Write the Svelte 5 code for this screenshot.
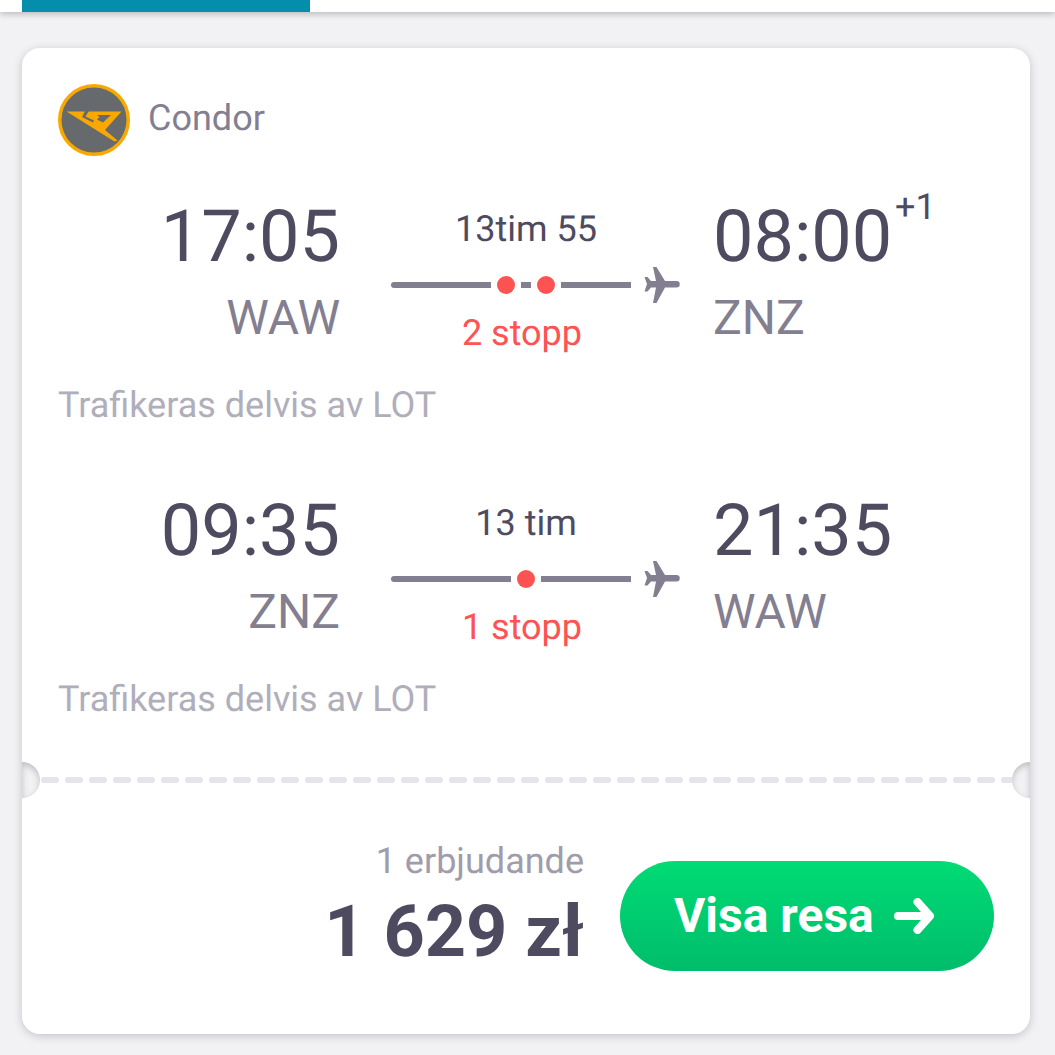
<script>
  const legs = [
    { dep: "17:05", from: "WAW", arr: "08:00", to: "ZNZ", plus: "+1", dur: "13tim 55", stops: 2, tail: 70, label: "2 stopp" },
    { dep: "09:35", from: "ZNZ", arr: "21:35", to: "WAW", plus: "", dur: "13 tim", stops: 1, tail: 90, label: "1 stopp" }
  ];
</script>

<div class="page">
  <div class="topbar"><div class="tab"></div></div>

  <main class="card">
    <section class="upper">
      <header class="airline">
        <svg class="logo" viewBox="0 0 72 72" width="72" height="72">
          <circle cx="36" cy="36" r="34.250" fill="#676a6c" stroke="#f9a800" stroke-width="3.500" />
          <path d="M8.500 27.500 H63.500 L47 46 L59.500 56.500 L56.500 57.500 Z" fill="#f9a800" />
          <path d="M27 27 H31 L27.500 32.500 L36 36.500 L35 38.500 L24 33 Z M39 31 H53 L45 38.500 L39 35.500 L41.500 33 Z" fill="#676a6c" />
        </svg>
        <span class="name">Condor</span>
      </header>

      {#each legs as leg}
        <div class="bound">
          <div class="leg">
            <div class="end left">
              <div class="time">{leg.dep}</div>
              <div class="code">{leg.from}</div>
            </div>
            <div class="mid">
              <div class="dur">{leg.dur}</div>
              <div class="track">
                <div class="line">
                  <span class="seg"></span>
                  {#each Array(leg.stops) as _, i}
                    {#if i > 0}<span class="seg short"></span>{/if}
                    <span class="dot"></span>
                  {/each}
                  <span class="seg last" style="width: {leg.tail}px"></span>
                </div>
                <svg class="plane" viewBox="0 0 36 36" width="36" height="36">
                  <path d="M9 0 H12.500 L21 14 H32.500 a3.250 3.250 0 0 1 0 6.500 H21 L12.500 36 H9 L12 20.500 H7 L3.500 24.500 H0.500 L3 17 L0.500 10 H3.500 L7 14 H12 Z" fill="#837f91" />
                </svg>
              </div>
              <div class="stops">{leg.label}</div>
            </div>
            <div class="end right">
              <div class="time">{leg.arr}{#if leg.plus}<sup>{leg.plus}</sup>{/if}</div>
              <div class="code">{leg.to}</div>
            </div>
          </div>
          <p class="operated">Trafikeras delvis av LOT</p>
        </div>
      {/each}
    </section>

    <div class="divider">
      <svg class="dashes" width="972" height="6" viewBox="0 0 972 6">
        <line x1="4" y1="3" x2="972" y2="3" stroke="#e4e4ea" stroke-width="6" stroke-linecap="round" stroke-dasharray="12 12" />
      </svg>
      <span class="notch n-left"></span>
      <span class="notch n-right"></span>
    </div>

    <footer class="bottom">
      <div class="price-box">
        <div class="offers">1 erbjudande</div>
        <div class="price">1 629 zł</div>
      </div>
      <button class="cta">
        <span class="cta-label">Visa resa</span>
        <svg viewBox="0 0 41 36" width="41" height="36">
          <path d="M4 18 H35.500 M23.500 4 L36 18 L23.500 32" fill="none" stroke="#fff" stroke-width="8" stroke-linecap="round" stroke-linejoin="round" />
        </svg>
      </button>
    </footer>
  </main>
</div>

<style>
  :global(body) {
    margin: 0;
    background: #f2f2f5;
  }
  .page {
    height: 1055px;
    overflow: hidden;
    background: #f2f2f5;
    font-family: Roboto, "Liberation Sans", sans-serif;
    text-rendering: geometricPrecision;
  }
  .topbar {
    height: 12px;
    padding-left: 22px;
    background: #fff;
    box-shadow: 0 2px 6px rgba(50, 50, 60, 0.3);
  }
  .tab {
    width: 288px;
    height: 12px;
    background: #048eab;
  }
  .card {
    position: relative;
    box-sizing: border-box;
    width: 1008px;
    height: 986px;
    margin: 36px 0 0 22px;
    background: #fff;
    border-radius: 18px;
    box-shadow: 0 2px 8px rgba(60, 60, 70, 0.25);
  }
  .upper {
    height: 729px;
    padding: 36px 36px 0;
    box-sizing: border-box;
  }
  .airline {
    display: flex;
    align-items: center;
    gap: 18px;
    height: 72px;
  }
  .name {
    margin-bottom: 4px;
    font-size: 36px;
    color: #837f91;
  }
  .bound {
    height: 255px;
    margin-top: 39px;
  }
  .leg {
    display: grid;
    grid-template-columns: 282px 340px 1fr;
    height: 186px;
  }
  .end.left {
    text-align: right;
  }
  .end.right {
    padding-left: 33px;
  }
  .time {
    position: relative;
    font-size: 72px;
    line-height: 84px;
    color: #4e4b60;
  }
  sup {
    position: absolute;
    left: 182px;
    top: -6px;
    font-size: 36px;
    line-height: 36px;
  }
  .code {
    margin-top: 11px;
    font-size: 48px;
    line-height: 56px;
    color: #837f91;
  }
  .mid {
    padding-left: 51px;
  }
  .dur {
    width: 240px;
    margin-top: 10px;
    margin-left: 15px;
    text-align: center;
    font-size: 36px;
    line-height: 48px;
    color: #4e4b60;
  }
  .track {
    display: flex;
    align-items: center;
    gap: 13px;
    height: 36px;
    margin-top: 14px;
  }
  .line {
    display: flex;
    align-items: center;
    gap: 6px;
    width: 240px;
  }
  .seg {
    flex: 1;
    height: 6px;
    background: #837f91;
    border-radius: 3px 0 0 3px;
  }
  .seg.short {
    flex: none;
    width: 10px;
    border-radius: 0;
  }
  .seg.last {
    flex: none;
    border-radius: 0;
  }
  .dot {
    width: 18px;
    height: 18px;
    border-radius: 50%;
    background: #ff5252;
  }
  .stops {
    width: 262px;
    margin-top: 6px;
    text-align: center;
    font-size: 36px;
    line-height: 48px;
    color: #ff5252;
  }
  .operated {
    margin: 0;
    font-size: 36px;
    line-height: 48px;
    color: #b0aebb;
  }
  .divider {
    position: relative;
    height: 6px;
    margin: 0 18px;
  }
  .dashes {
    display: block;
  }
  .notch {
    position: absolute;
    top: -15px;
    width: 18px;
    height: 36px;
    background: #f2f2f5;
    box-shadow: inset 0 3px 6px rgba(60, 60, 70, 0.28);
  }
  .n-left {
    left: -18px;
    border-radius: 0 18px 18px 0;
  }
  .n-right {
    right: -18px;
    border-radius: 18px 0 0 18px;
  }
  .bottom {
    display: flex;
    justify-content: flex-end;
    align-items: flex-start;
    gap: 36px;
    padding: 54px 36px 0 0;
  }
  .price-box {
    text-align: right;
  }
  .offers {
    margin-bottom: 5px;
    font-size: 36px;
    line-height: 48px;
    color: #9f9cac;
  }
  .price {
    font-size: 72px;
    line-height: 84px;
    font-weight: 700;
    color: #4e4b60;
  }
  .cta {
    display: flex;
    align-items: center;
    gap: 20px;
    box-sizing: border-box;
    width: 374px;
    height: 110px;
    margin-top: 24px;
    border: 0;
    padding: 0 0 0 54px;
    border-radius: 55px;
    background: linear-gradient(180deg, #00db75, #00bd6b);
    color: #fff;
    font-family: inherit;
    font-size: 48px;
    font-weight: 700;
  }
  .cta-label {
    margin-bottom: 2px;
  }
</style>
